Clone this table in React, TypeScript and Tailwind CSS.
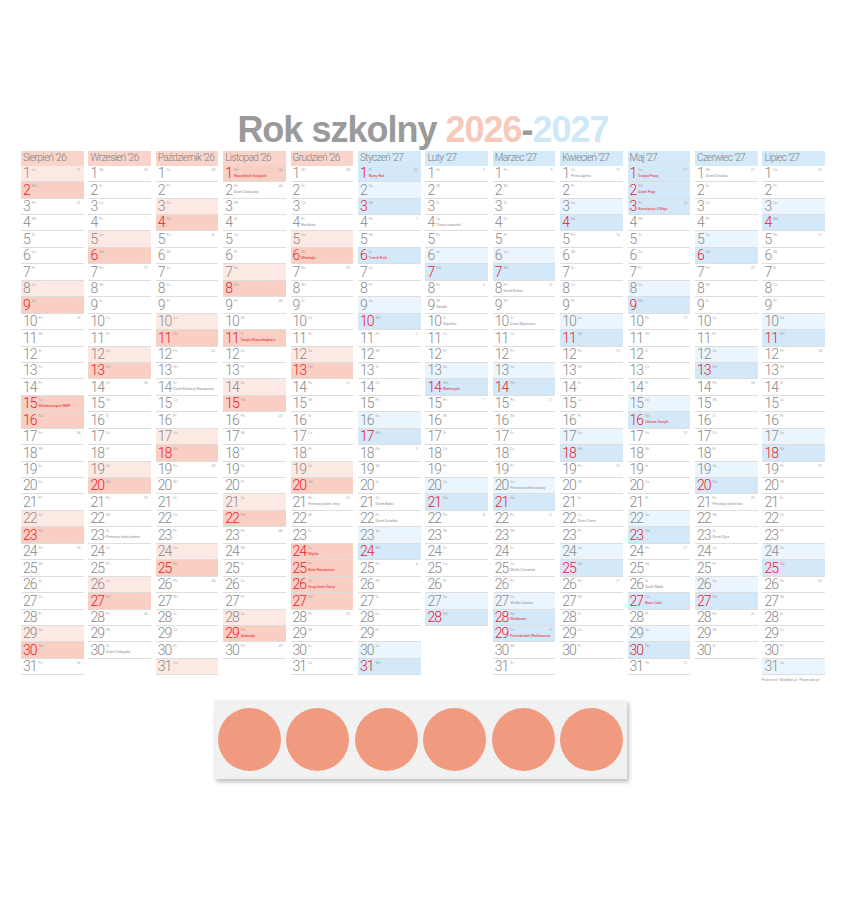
const MONTHS = [
  { name: "Sierpień '26", year: 2026, month: 7, warm: true },
  { name: "Wrzesień '26", year: 2026, month: 8, warm: true },
  { name: "Październik '26", year: 2026, month: 9, warm: true },
  { name: "Listopad '26", year: 2026, month: 10, warm: true },
  { name: "Grudzień '26", year: 2026, month: 11, warm: true },
  { name: "Styczeń '27", year: 2027, month: 0, warm: false },
  { name: "Luty '27", year: 2027, month: 1, warm: false },
  { name: "Marzec '27", year: 2027, month: 2, warm: false },
  { name: "Kwiecień '27", year: 2027, month: 3, warm: false },
  { name: "Maj '27", year: 2027, month: 4, warm: false },
  { name: "Czerwiec '27", year: 2027, month: 5, warm: false },
  { name: "Lipiec '27", year: 2027, month: 6, warm: false },
];

// public holidays (red, dark row)
const HOLIDAYS = new Set([
  "2026-8-15",
  "2026-11-1",
  "2026-11-11",
  "2026-12-24",
  "2026-12-25",
  "2026-12-26",
  "2027-1-1",
  "2027-1-6",
  "2027-3-28",
  "2027-3-29",
  "2027-5-1",
  "2027-5-3",
  "2027-5-16",
  "2027-5-27",
]);

const NOTES: Record<string, string> = {
  "2026-8-15": "Wniebowzięcie NMP",
  "2026-9-23": "Pierwszy dzień jesieni",
  "2026-9-30": "Dzień Chłopaka",
  "2026-10-14": "Dzień Edukacji Narodowej",
  "2026-11-1": "Wszystkich Świętych",
  "2026-11-2": "Dzień Zaduszny",
  "2026-11-11": "Święto Niepodległości",
  "2026-11-29": "Andrzejki",
  "2026-12-4": "Barbórka",
  "2026-12-6": "Mikołajki",
  "2026-12-21": "Pierwszy dzień zimy",
  "2026-12-24": "Wigilia",
  "2026-12-25": "Boże Narodzenie",
  "2026-12-26": "Drugi dzień Świąt",
  "2027-1-1": "Nowy Rok",
  "2027-1-6": "Trzech Króli",
  "2027-1-21": "Dzień Babci",
  "2027-1-22": "Dzień Dziadka",
  "2027-2-4": "Tłusty czwartek",
  "2027-2-9": "Ostatki",
  "2027-2-10": "Popielec",
  "2027-2-14": "Walentynki",
  "2027-3-8": "Dzień Kobiet",
  "2027-3-10": "Dzień Mężczyzn",
  "2027-3-20": "Pierwszy dzień wiosny",
  "2027-3-25": "Wielki Czwartek",
  "2027-3-27": "Wielka Sobota",
  "2027-3-28": "Wielkanoc",
  "2027-3-29": "Poniedziałek Wielkanocny",
  "2027-4-1": "Prima Aprilis",
  "2027-4-22": "Dzień Ziemi",
  "2027-5-1": "Święto Pracy",
  "2027-5-2": "Dzień Flagi",
  "2027-5-3": "Konstytucji 3 Maja",
  "2027-5-16": "Zielone Świątki",
  "2027-5-26": "Dzień Matki",
  "2027-5-27": "Boże Ciało",
  "2027-6-1": "Dzień Dziecka",
  "2027-6-21": "Pierwszy dzień lata",
  "2027-6-23": "Dzień Ojca",
};

const WEEKDAYS = ["Nd", "Pn", "Wt", "Śr", "Cz", "Pt", "So"];

function isoWeek(d: Date) {
  const t = new Date(Date.UTC(d.getFullYear(), d.getMonth(), d.getDate()));
  const day = t.getUTCDay() || 7;
  t.setUTCDate(t.getUTCDate() + 4 - day);
  const start = new Date(Date.UTC(t.getUTCFullYear(), 0, 1));
  return Math.ceil(((t.getTime() - start.getTime()) / 86400000 + 1) / 7);
}

function DayRow({ year, month, day, warm }: { year: number; month: number; day: number; warm: boolean }) {
  const date = new Date(year, month, day);
  const wd = date.getDay();
  const key = `${year}-${month + 1}-${day}`;
  const red = wd === 0 || HOLIDAYS.has(key);
  const sat = wd === 6 && !red;
  const note = NOTES[key];
  const showWeek = day === 1 || wd === 1;

  let bg = "";
  if (red) bg = warm ? "bg-[#f9cec3]" : "bg-[#d3e9f9]";
  else if (sat) bg = warm ? "bg-[#fde9e4]" : "bg-[#eaf5fd]";

  return (
    <div className={`flex h-[16.45px] items-end overflow-hidden border-b border-[#dddddd] pl-[2px] pr-[3px] ${bg}`}>
      <span
        className={`pb-[1px] text-[14px] font-light leading-none tracking-[-1px] ${
          red ? "text-[#e8212b]" : "text-[#8a8a8a]"
        }`}
      >
        {day}
      </span>
      <div className="ml-[2px] flex h-full min-w-0 flex-col justify-between pt-[3px] pb-[3px]">
        <span className="text-[3.5px] leading-none text-[#aaaaaa]">{WEEKDAYS[wd]}</span>
        {note && (
          <span className={`whitespace-nowrap text-[3.5px] leading-none ${red ? "text-[#e8212b]" : "text-[#8e8e8e]"}`}>
            {note}
          </span>
        )}
      </div>
      {showWeek && (
        <span className="ml-auto self-start pt-[3px] text-[3.5px] leading-none text-[#b0b0b0]">{isoWeek(date)}</span>
      )}
    </div>
  );
}

export default function App() {
  return (
    <div className="min-h-[900px] w-full bg-white font-['Roboto','Liberation_Sans',sans-serif]">
      <div className="mx-auto w-[804px] pt-[112px]">
        <h1 className="text-center font-['Liberation_Sans',Arial,sans-serif] text-[36px] font-bold leading-[36px] tracking-[-1px] text-[#9a9a9a]">
          Rok szkolny <span className="text-[#f7c9bb]">2026</span>-<span className="text-[#cfe8f8]">2027</span>
        </h1>

        <div className="mt-[3px] grid grid-cols-12 gap-x-[4.8px]">
          {MONTHS.map((m) => {
            const days = new Date(m.year, m.month + 1, 0).getDate();
            return (
              <div key={m.name} className="flex min-w-0 flex-col">
                <div
                  className={`flex h-[14.7px] items-center whitespace-nowrap pl-[2px] text-[10px] font-light leading-none tracking-[-0.6px] text-[#7f7f7f] ${
                    m.warm ? "bg-[#f9d4ca]" : "bg-[#d4eaf9]"
                  }`}
                >
                  {m.name}
                </div>
                {Array.from({ length: days }, (_, i) => (
                  <DayRow key={i} year={m.year} month={m.month} day={i + 1} warm={m.warm} />
                ))}
              </div>
            );
          })}
        </div>

        <div className="mt-[2px] flex h-[6px] justify-end pr-[6px] text-[3.5px] leading-[6px] text-[#999999]">
          Producent : ManMat.pl - Planerado.pl
        </div>

        <div className="ml-[193px] mt-[17px] flex h-[79px] w-[413px] items-center justify-between bg-[#f1f1f1] px-[4px] shadow-[2px_3px_4px_rgba(0,0,0,0.25)]">
          {Array.from({ length: 6 }, (_, i) => (
            <div key={i} className="h-[63px] w-[63px] rounded-full bg-[#f09a7f]" />
          ))}
        </div>
      </div>
    </div>
  );
}
